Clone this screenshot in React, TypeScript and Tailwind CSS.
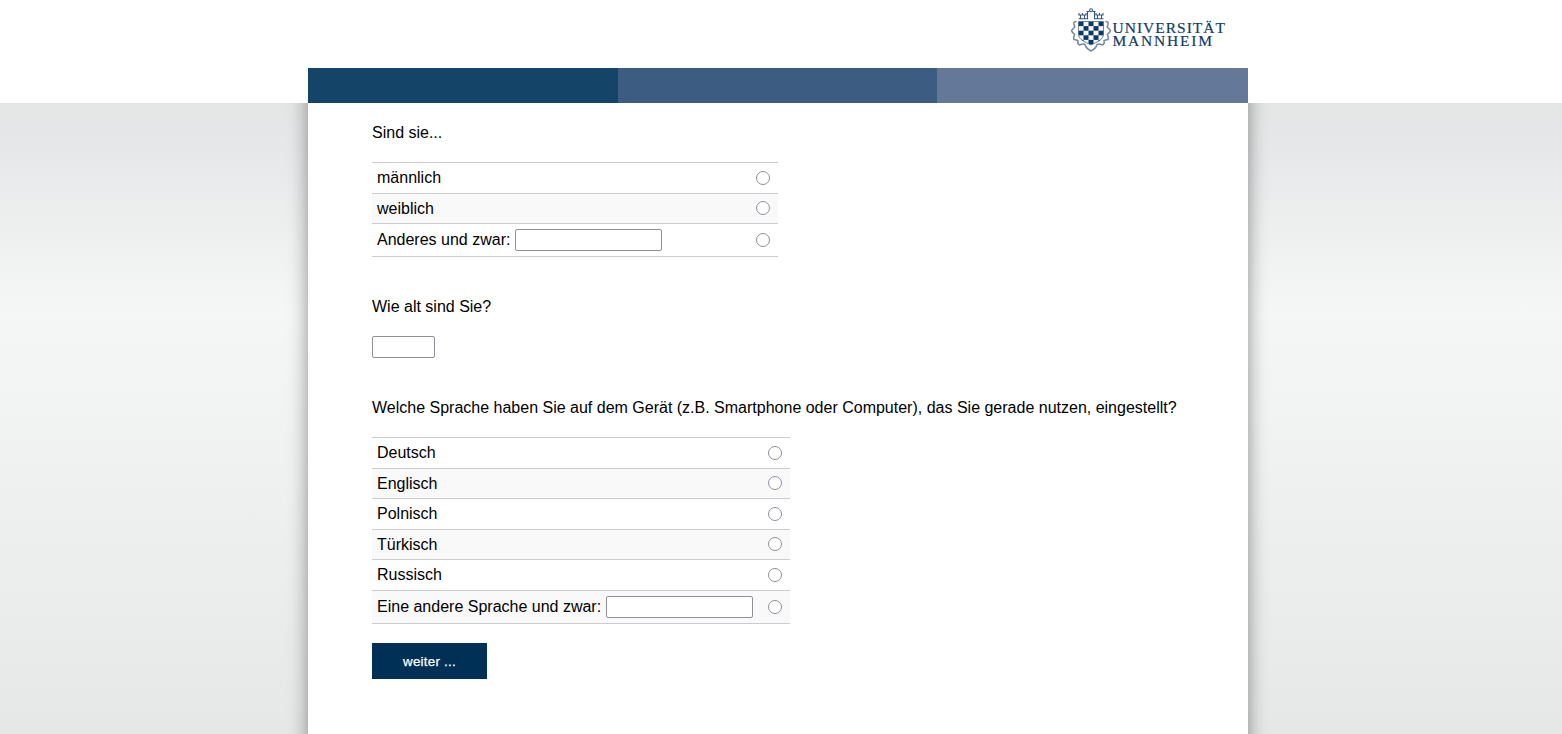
import { useState } from "react";

type Option = { label: string; height: string; input?: boolean };

const genderOptions: Option[] = [
  { label: "männlich", height: "h-[31px]" },
  { label: "weiblich", height: "h-[30px]" },
  { label: "Anderes und zwar:", height: "h-[33px]", input: true },
];

const languageOptions: Option[] = [
  { label: "Deutsch", height: "h-[31px]" },
  { label: "Englisch", height: "h-[30px]" },
  { label: "Polnisch", height: "h-[31px]" },
  { label: "Türkisch", height: "h-[30px]" },
  { label: "Russisch", height: "h-[31px]" },
  { label: "Eine andere Sprache und zwar:", height: "h-[33px]", input: true },
];

const inputClass =
  "h-[22px] rounded-[2px] border border-[#8f8f9d] bg-white px-1 text-sm outline-none";

function OptionList({ name, options, width }: { name: string; options: Option[]; width: string }) {
  const [selected, setSelected] = useState<number | null>(null);
  return (
    <div className={`${width} border-b border-[#cccccc]`}>
      {options.map((option, i) => (
        <div
          key={option.label}
          className={`${option.height} flex items-center justify-between border-t border-[#cccccc] pr-2 pl-[5px] ${
            i % 2 === 1 ? "bg-[#f9f9f9]" : "bg-white"
          }`}
        >
          <div className="flex items-center gap-[5px]">
            <span className="leading-5">{option.label}</span>
            {option.input && <input type="text" className={`${inputClass} w-[147px]`} />}
          </div>
          <input
            type="radio"
            name={name}
            checked={selected === i}
            onChange={() => setSelected(i)}
            className={`h-3.5 w-3.5 appearance-none rounded-full border border-[#8f8f9d] bg-white checked:border-4 checked:border-[#003056] ${
              i % 2 === 1 && !option.input ? "mb-px" : ""
            }`}
          />
        </div>
      ))}
    </div>
  );
}

const shield = "M8.500 14.500H33.500V27C33.500 32.500 28 34.500 21 38C14 34.500 8.500 32.500 8.500 27Z";

function Logo() {
  return (
    <svg width="157" height="47" viewBox="0 0 157 47" role="img" aria-label="Universität Mannheim">
      <defs>
        <clipPath id="shield">
          <path d={shield} />
        </clipPath>
      </defs>
      <path
        d="M6.500 14.500Q3.500 14.500 3.800 17L4.800 20L1.500 23.500Q2 25.500 4.800 27.500Q2.800 31 4 32.500L8 33.500Q7 37 9.500 38Q13 36.500 15 37.500Q16 41.500 21 44Q26 41.500 27 37.500Q29 36.500 32.500 38Q35 37 34 33.500L38 32.500Q39.200 31 37.200 27.500Q40 25.500 40.500 23.500L37.200 20L38.200 17Q38.500 14.500 35.500 14.500"
        fill="none"
        stroke="#7389a3"
        strokeWidth="1.500"
        strokeLinejoin="round"
      />
      <g fill="none" stroke="#34587d" strokeWidth="1.100">
        <path d="M10.500 11.500V8M14.500 11.500V8M9 6V8H16V6M12.500 6V8M8.500 11.800H17.500V4.500M27.500 11.500V8M31.500 11.500V8M26 6V8H33V6M29.500 6V8M33.500 11.800H24.500V4.500M16.500 4.500H19.500M22.500 4.500H25.500" />
        <circle cx="21" cy="3.300" r="1.500" />
      </g>
      <path d={shield} fill="#f4f6f9" stroke="#4a6a8b" strokeWidth=".8" />
      <g clipPath="url(#shield)" fill="#0c3863">
        {[0, 1, 2, 3, 4, 5].map((row) =>
          [0, 1, 2, 3, 4].map((col) =>
            (row + col) % 2 === 0 ? (
              <rect key={`${row}-${col}`} x={8.5 + col * 5} y={14.5 + row * 4.6} width="5" height="4.600" />
            ) : null,
          ),
        )}
      </g>
      <g
        fill="#123b66"
        stroke="#123b66"
        strokeWidth=".2"
        className="font-['Liberation_Serif',serif] text-[15.500px]"
      >
        <text x="42.500" y="25.500" textLength="112.500">UNIVERSITÄT</text>
        <text x="42.500" y="39.300" textLength="99.500">MANNHEIM</text>
      </g>
    </svg>
  );
}

export default function App() {
  return (
    <div className="flex h-[734px] flex-col overflow-hidden bg-white font-['Liberation_Sans',Arial,sans-serif] text-base text-black">
      <header className="ml-[308px] w-[940px] shrink-0">
        <div className="flex h-[68px] items-start justify-end pt-[7px] pr-[21px]">
          <Logo />
        </div>
        <div className="flex h-[35px]">
          <div className="w-[310px] bg-[#144569]" />
          <div className="w-[319px] bg-[#3d5c82]" />
          <div className="w-[311px] bg-[#647899]" />
        </div>
      </header>
      <div className="flex min-h-0 flex-1 overflow-hidden bg-[linear-gradient(to_bottom,#e4e6e6_0%,#e7e8e9_8%,#f5f7f6_33%,#e6e7e7_100%)]">
        <main className="-mt-6 -mb-6 ml-[308px] w-[940px] bg-white pt-11 pl-16 shadow-[0_0_18px_rgba(0,0,0,0.42)]">
          <p className="leading-5">Sind sie...</p>
          <div className="mt-[19px]">
            <OptionList name="gender" options={genderOptions} width="w-[406px]" />
          </div>
          <p className="mt-10 leading-5">Wie alt sind Sie?</p>
          <input type="text" className={`${inputClass} mt-[19px] block w-[63px]`} />
          <p className="mt-10 leading-5 whitespace-nowrap">
            Welche Sprache haben Sie auf dem Gerät (z.B. Smartphone oder Computer), das Sie gerade nutzen, eingestellt?
          </p>
          <div className="mt-[19px]">
            <OptionList name="language" options={languageOptions} width="w-[418px]" />
          </div>
          <button
            type="button"
            className="mt-[19px] block h-9 w-[115px] bg-[#003056] pt-0.5 text-[13.333px] tracking-[0.25px] text-white [-webkit-text-stroke:0.25px_white]"
          >
            weiter ...
          </button>
        </main>
      </div>
    </div>
  );
}
